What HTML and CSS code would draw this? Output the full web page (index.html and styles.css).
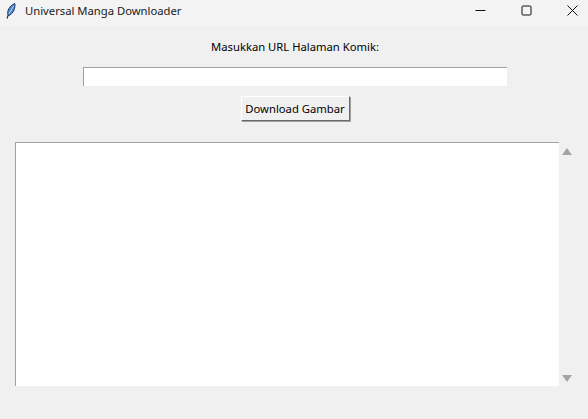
FILE: index.html
```html
<!DOCTYPE html>
<html lang="id">
<head>
    <meta charset="UTF-8">
    <meta name="viewport" content="width=device-width, initial-scale=1.0">
    <title>Universal Manga Downloader</title>
    <link rel="stylesheet" href="styles.css">
</head>
<body>
    <div class="titlebar">
        <svg class="app-icon" width="10" height="16" viewBox="0 0 10 16">
            <path d="M1 15.5 L2.6 11" stroke="#16253f" stroke-width="1.1" fill="none"/>
            <path d="M2 12 C0.8 8 3.2 3 8.8 0.5 C9.6 4.5 7.6 10 3.4 12.4 Z" fill="#4a8ad8" stroke="#14284f" stroke-width="0.9"/>
            <path d="M3 10.8 L7.6 2.8" stroke="#cfe3f8" stroke-width="0.8" fill="none"/>
        </svg>
        <span class="title">Universal Manga Downloader</span>
        <div class="window-buttons">
            <svg width="11" height="11" viewBox="0 0 11 11"><path d="M0.5 5.5 H10.5" stroke="#111" stroke-width="1" fill="none"/></svg>
            <svg width="11" height="11" viewBox="0 0 11 11"><rect x="1" y="1" width="9" height="9" rx="1" stroke="#111" stroke-width="1" fill="none"/></svg>
            <svg width="11" height="11" viewBox="0 0 11 11"><path d="M0.5 0.5 L10.5 10.5 M10.5 0.5 L0.5 10.5" stroke="#111" stroke-width="1" fill="none"/></svg>
        </div>
    </div>

    <main class="content">
        <label class="url-label" for="urlInput">Masukkan URL Halaman Komik:</label>
        <input class="url-input" type="text" id="urlInput">
        <button class="download-btn" type="button">Download Gambar</button>

        <div class="log-row">
            <textarea class="log-box"></textarea>
            <div class="scrollbar">
                <svg width="10" height="7" viewBox="0 0 10 7"><path d="M5 0 L10 7 H0 Z" fill="#a3a3a3"/></svg>
                <svg width="10" height="7" viewBox="0 0 10 7"><path d="M0 0 H10 L5 7 Z" fill="#a3a3a3"/></svg>
            </div>
        </div>
    </main>
</body>
</html>
```

FILE: styles.css
```css
html, body {
    margin: 0;
    padding: 0;
    height: 100%;
}

body {
    background-color: #f0f0f0;
    font-family: "Noto Sans", "Open Sans", sans-serif;
    font-size: 11.25px;
    color: #000;
    overflow: hidden;
}

.titlebar {
    display: flex;
    align-items: center;
    height: 26px;
    padding: 0 0 5px 6px;
    background-color: #f3f3f3;
    box-sizing: border-box;
}

.app-icon {
    margin-right: 9px;
}

.title {
    flex: 1;
    color: #1a1a1a;
}

.window-buttons {
    display: flex;
    gap: 35px;
    margin-right: 10px;
}

.content {
    display: flex;
    flex-direction: column;
    align-items: center;
    padding: 12px 0 0 2px;
}

.url-label {
    height: 17px;
    line-height: 17px;
}

.url-input {
    width: 424px;
    height: 19px;
    margin: 12px 0 0;
    padding: 0;
    border: none;
    border-top: 1px solid #a0a0a0;
    border-left: 1px solid #a0a0a0;
    background-color: #fff;
    box-sizing: border-box;
    outline: none;
}

.download-btn {
    width: 109px;
    height: 25px;
    margin-top: 10px;
    padding: 0;
    font-family: inherit;
    font-size: 11.25px;
    color: #000;
    background-color: #f0f0f0;
    border: 1px solid;
    border-color: #fff #696969 #696969 #fff;
    box-shadow: 1px 1px 0 #a0a0a0;
}

.log-row {
    display: flex;
    align-self: stretch;
    height: 244px;
    margin-top: 21px;
    padding-left: 13px;
}

.log-box {
    width: 544px;
    height: 100%;
    margin: 0;
    padding: 0;
    border: none;
    border-top: 1px solid #a0a0a0;
    border-left: 1px solid #a0a0a0;
    background-color: #fff;
    box-sizing: border-box;
    resize: none;
    outline: none;
}

.scrollbar {
    display: flex;
    flex-direction: column;
    justify-content: space-between;
    align-items: center;
    width: 16px;
    padding: 6px 0 4px;
    box-sizing: border-box;
}
```
